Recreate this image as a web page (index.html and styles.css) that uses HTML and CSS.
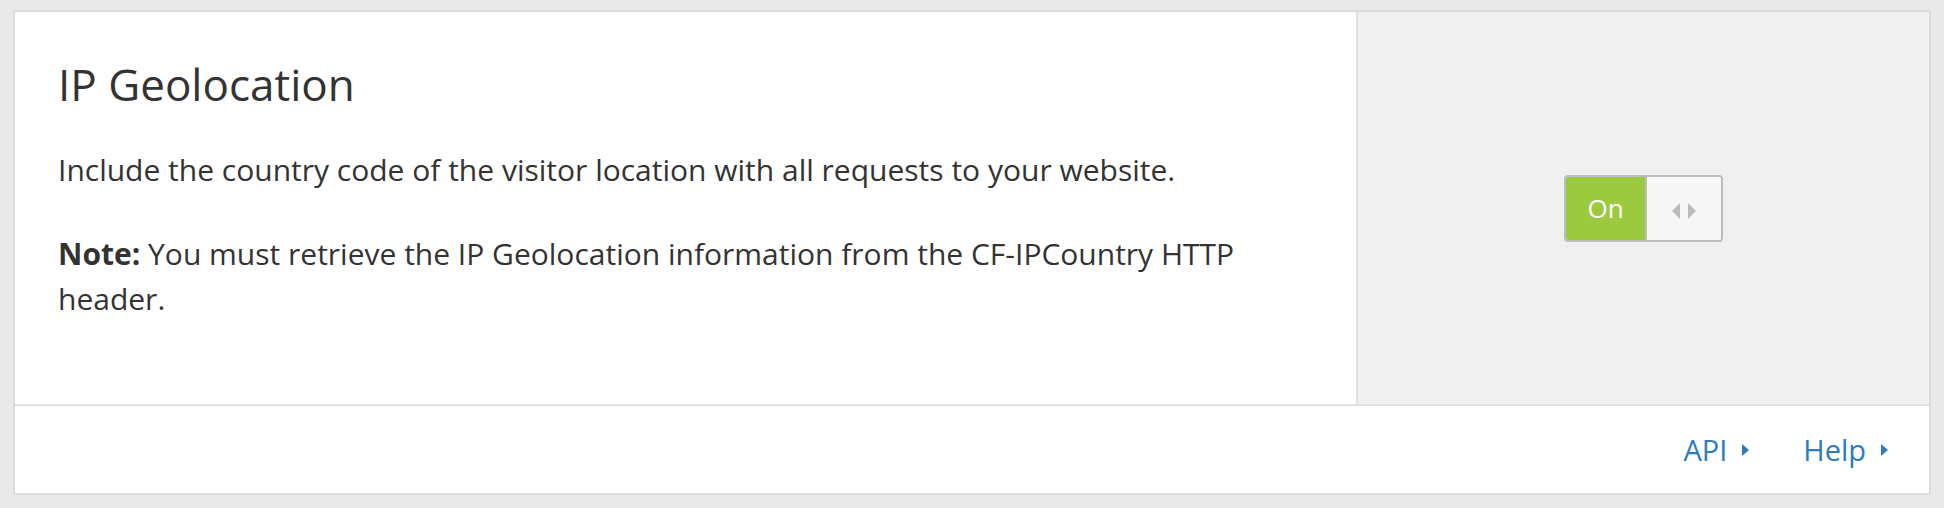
FILE: index.html
```html
<!DOCTYPE html>
<html lang="en">
<head>
    <meta charset="UTF-8">
    <meta name="viewport" content="width=device-width, initial-scale=1.0">
    <title>IP Geolocation</title>
    <link rel="stylesheet" href="styles.css">
</head>
<body>
    <div class="card">
        <div class="card-body">
            <div class="card-content">
                <h3 class="card-title">IP Geolocation</h3>
                <p>Include the country code of the visitor location with all requests to your website.</p>
                <p><strong>Note:</strong> You must retrieve the IP Geolocation information from the CF-IPCountry HTTP header.</p>
            </div>
            <div class="card-control">
                <div class="toggle">
                    <span class="toggle-on">On</span>
                    <span class="toggle-handle">
                        <span class="arrow arrow-left"></span>
                        <span class="arrow arrow-right"></span>
                    </span>
                </div>
            </div>
        </div>
        <div class="card-footer">
            <a class="footer-link" href="#">API</a>
            <a class="footer-link" href="#">Help</a>
        </div>
    </div>
</body>
</html>
```

FILE: styles.css
```css
html, body {
    margin: 0;
    padding: 0;
    height: 100%;
}
body {
    box-sizing: border-box;
    padding: 10px 13px 13px 13px;
    background: #e9e9e9;
    font-family: "Open Sans", "Liberation Sans", sans-serif;
    color: #333;
}
.card {
    box-sizing: border-box;
    height: 100%;
    display: flex;
    flex-direction: column;
    background: #fff;
    border: 2px solid #dcdcdc;
    border-radius: 3px;
}
.card-body {
    flex: 1;
    display: flex;
}
.card-content {
    flex: 1;
    padding: 46px 43px 0 43px;
}
.card-title {
    margin: 0;
    font-size: 44px;
    font-weight: 400;
    line-height: 1.2;
}
.card-content p {
    margin: 36px 0 0 0;
    font-size: 30px;
    line-height: 45px;
}
.card-content p + p {
    margin-top: 39px;
}
.card-content strong {
    font-weight: 700;
}
.card-control {
    box-sizing: border-box;
    width: 573px;
    background: #f0f0f0;
    border-left: 2px solid #e0e0e0;
    display: flex;
    align-items: center;
    justify-content: center;
}
.toggle {
    box-sizing: border-box;
    width: 159px;
    height: 67px;
    display: flex;
    border: 2px solid #bdbdbd;
    border-radius: 4px;
    overflow: hidden;
}
.toggle-on {
    width: 79px;
    background: #9bca3e;
    color: #fff;
    font-size: 26px;
    display: flex;
    align-items: center;
    justify-content: center;
    border-right: 2px solid #bdbdbd;
}
.toggle-handle {
    flex: 1;
    background: #f7f7f7;
    display: flex;
    align-items: center;
    justify-content: center;
    gap: 8px;
    padding-top: 6px;
}
.arrow {
    width: 0;
    height: 0;
    border-top: 8px solid transparent;
    border-bottom: 8px solid transparent;
}
.arrow-left {
    border-right: 8px solid #bbb;
}
.arrow-right {
    border-left: 8px solid #bbb;
}
.card-footer {
    box-sizing: border-box;
    height: 89px;
    border-top: 2px solid #e0e0e0;
    display: flex;
    align-items: center;
    justify-content: flex-end;
    gap: 54px;
    padding: 0 41px 0 0;
}
.footer-link {
    color: #2f7bbf;
    text-decoration: none;
    font-size: 29px;
    display: flex;
    align-items: center;
}
.footer-link::after {
    content: "";
    margin-left: 15px;
    border-top: 6px solid transparent;
    border-bottom: 6px solid transparent;
    border-left: 7px solid #2f7bbf;
}
```
